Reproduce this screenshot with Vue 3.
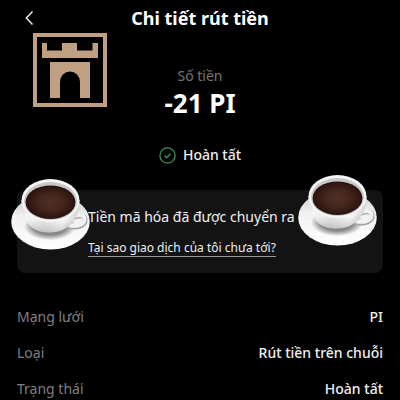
<script setup>
const details = [
  { label: 'Mạng lưới', value: 'PI' },
  { label: 'Loại', value: 'Rút tiền trên chuỗi' },
  { label: 'Trạng thái', value: 'Hoàn tất' },
]
const cups = ['left', 'right']
</script>

<template>
  <main class="page">
    <header class="bar">
      <button class="back" type="button" aria-label="Quay lại">
        <svg width="10" height="16" viewBox="0 0 10 16" fill="none" stroke="#eee" stroke-width="1.5">
          <path d="M8.5 1.5 2.3 8l6.2 6.5" />
        </svg>
      </button>
      <h1>Chi tiết rút tiền</h1>
    </header>

    <svg class="logo" viewBox="0 0 74 74" aria-hidden="true">
      <rect class="frame" x="2" y="2" width="70" height="70" />
      <path class="stone" d="M9 10h5v7.5h15V10h15v7.5h15.5V10H65v15H9z" />
      <path class="stone" d="M17 29h40v36H47V49a10 10.5 0 0 0-20 0v16H17z" />
    </svg>

    <section class="summary">
      <p class="caption">Số tiền</p>
      <p class="amount">-21 PI</p>
      <p class="status">
        <svg width="17" height="17" viewBox="0 0 17 17" fill="none" stroke="#3d8f58" aria-hidden="true">
          <circle cx="8.5" cy="8.5" r="7.6" stroke-width="1.3" />
          <path d="m5.5 8.7 2.2 2.1 3.9-4" stroke-width="1.4" />
        </svg>
        <span>Hoàn tất</span>
      </p>
    </section>

    <section class="notice">
      <p>Tiền mã hóa đã được chuyển ra</p>
      <a href="#">Tại sao giao dịch của tôi chưa tới?</a>
      <svg v-for="side in cups" :key="side" class="cup" :class="side" viewBox="0 0 80 74" aria-hidden="true">
        <defs>
          <linearGradient :id="side + '-saucer'" x1="0" y1="0" x2="0" y2="1">
            <stop offset="0" stop-color="#c4c4c4" />
            <stop offset=".4" stop-color="#f0f0f0" />
            <stop offset="1" stop-color="#fff" />
          </linearGradient>
          <radialGradient :id="side + '-shade'" cx=".5" cy=".5" r=".5">
            <stop offset="0" stop-color="#666" />
            <stop offset=".65" stop-color="#8c8c8c" />
            <stop offset="1" stop-color="#f4f4f4" />
          </radialGradient>
          <linearGradient :id="side + '-body'" x1="0" y1="0" x2="1" y2="0.15">
            <stop offset="0" stop-color="#d4d4d4" />
            <stop offset=".15" stop-color="#f4f4f4" />
            <stop offset=".5" stop-color="#e8e8e8" />
            <stop offset=".8" stop-color="#fafafa" />
            <stop offset="1" stop-color="#d4d4d4" />
          </linearGradient>
          <linearGradient :id="side + '-low'" x1="0" y1="0" x2="0" y2="1">
            <stop offset=".6" stop-color="#888" stop-opacity="0" />
            <stop offset="1" stop-color="#777" stop-opacity=".35" />
          </linearGradient>
          <radialGradient :id="side + '-coffee'" cx=".5" cy=".5" r=".52">
            <stop offset="0" stop-color="#513024" />
            <stop offset=".5" stop-color="#43261c" />
            <stop offset="1" stop-color="#27100c" />
          </radialGradient>
        </defs>
        <ellipse cx="39.5" cy="43.7" rx="39.3" ry="27.8" :fill="`url(#${side}-saucer)`" />
        <ellipse cx="39" cy="48" rx="26" ry="14" :fill="`url(#${side}-shade)`" />
        <path d="M61 40C67 36.5 74 37 74 42c0 6-8 8.5-16 6" fill="none" stroke="#a2a2a2" stroke-width="5" />
        <path d="M61 39C67 35.500 73.500 36.500 73.500 41.200c0 5-7.500 8-15.500 6" fill="none" stroke="#f2f2f2" stroke-width="4" />
        <path d="M10.500 22C10.500 42 19 54.500 38 54.500S68.500 42 68.500 22z" :fill="`url(#${side}-body)`" />
        <path d="M10.500 22C10.500 42 19 54.500 38 54.500S68.500 42 68.500 22z" :fill="`url(#${side}-low)`" />
        <ellipse cx="39.5" cy="22.500" rx="29" ry="21.500" fill="#f6f6f6" />
        <ellipse cx="39.5" cy="23" rx="26.500" ry="19" fill="#c8c8c8" />
        <ellipse cx="39.5" cy="24.200" rx="24.900" ry="16.800" :fill="`url(#${side}-coffee)`" />
      </svg>
    </section>

    <dl class="details">
      <div v-for="item in details" :key="item.label" class="row">
        <dt>{{ item.label }}</dt>
        <dd>{{ item.value }}</dd>
      </div>
    </dl>
  </main>
</template>

<style>
body {
  background: #000;
}
</style>

<style scoped>
.page {
  position: relative;
  color: #f0f0f0;
  font-family: "Noto Sans", sans-serif;
  font-size: 14px;
  line-height: 20px;
}
h1, p, dl, dd {
  margin: 0;
}
.bar {
  display: grid;
  grid-template-columns: 32px 1fr 32px;
  align-items: center;
  padding: 6px 8px;
}
.back {
  display: flex;
  justify-content: center;
  padding: 4px 0 4px 10px;
  border: 0;
  background: none;
}
h1 {
  font-size: 18px;
  line-height: 24px;
  font-weight: 700;
  color: #fff;
  text-align: center;
}
.logo {
  position: absolute;
  left: 33px;
  top: 33px;
  width: 74px;
}
.frame {
  fill: #000;
  stroke: #bfa082;
  stroke-width: 4;
}
.stone {
  fill: #bfa082;
}
.summary {
  display: flex;
  flex-direction: column;
  align-items: center;
  padding-top: 30px;
}
.caption {
  color: #777;
}
.amount {
  margin-top: 1px;
  font-size: 26px;
  line-height: 32px;
  font-weight: 700;
  color: #fff;
}
.status {
  display: flex;
  align-items: center;
  gap: 7px;
  margin-top: 26px;
  font-weight: 500;
}
.notice {
  position: relative;
  display: flex;
  flex-direction: column;
  align-items: flex-start;
  gap: 12px;
  margin: 25px 17px 0;
  padding: 17px 16px 16px 71px;
  border-radius: 8px;
  background: #131313;
}
.notice a {
  border-bottom: 1px solid #999;
  color: #f0f0f0;
  font-size: 12px;
  line-height: 17px;
  text-decoration: none;
}
.cup {
  position: absolute;
  width: 80px;
}
.left {
  left: -6px;
  top: -12px;
}
.right {
  right: 5px;
  top: -16px;
}
.details {
  display: flex;
  flex-direction: column;
  gap: 16px;
  padding: 34px 17px 0;
}
.row {
  display: flex;
  justify-content: space-between;
}
dt {
  color: #808080;
}
dd {
  font-weight: 500;
}
</style>
